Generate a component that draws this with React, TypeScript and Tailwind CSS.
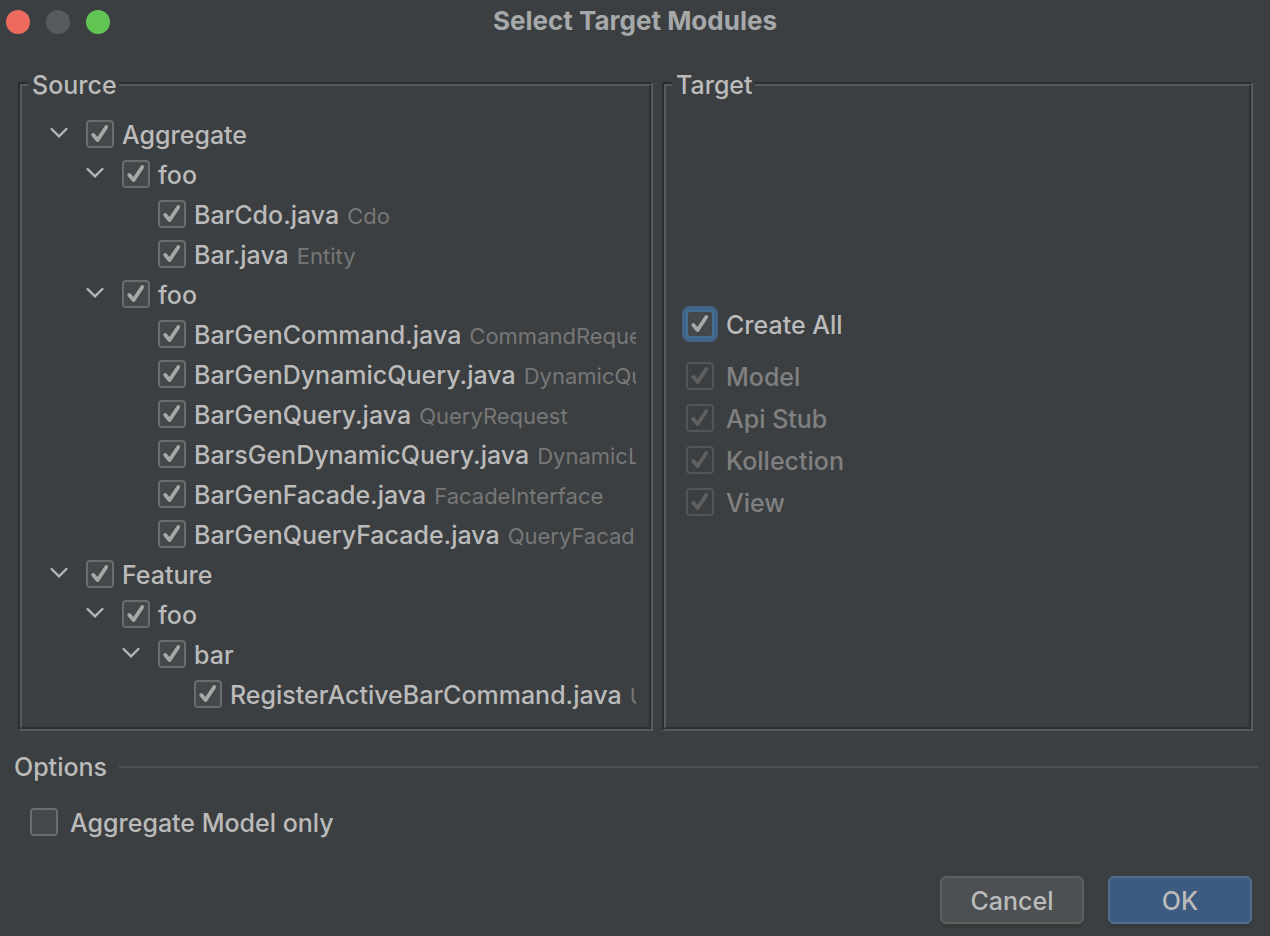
import { useState, type ReactNode } from 'react';

type Node = {
  id: string;
  name: string;
  kind?: string;
  children?: Node[];
};

const tree: Node[] = [
  {
    id: 'aggregate',
    name: 'Aggregate',
    children: [
      {
        id: 'aggregate-foo-1',
        name: 'foo',
        children: [
          { id: 'bar-cdo', name: 'BarCdo.java', kind: 'Cdo' },
          { id: 'bar', name: 'Bar.java', kind: 'Entity' },
        ],
      },
      {
        id: 'aggregate-foo-2',
        name: 'foo',
        children: [
          { id: 'gen-command', name: 'BarGenCommand.java', kind: 'CommandReque' },
          { id: 'gen-dynamic', name: 'BarGenDynamicQuery.java', kind: 'DynamicQu' },
          { id: 'gen-query', name: 'BarGenQuery.java', kind: 'QueryRequest' },
          { id: 'bars-dynamic', name: 'BarsGenDynamicQuery.java', kind: 'DynamicL' },
          { id: 'gen-facade', name: 'BarGenFacade.java', kind: 'FacadeInterface' },
          { id: 'query-facade', name: 'BarGenQueryFacade.java', kind: 'QueryFacade' },
        ],
      },
    ],
  },
  {
    id: 'feature',
    name: 'Feature',
    children: [
      {
        id: 'feature-foo',
        name: 'foo',
        children: [
          {
            id: 'feature-bar',
            name: 'bar',
            children: [
              { id: 'register', name: 'RegisterActiveBarCommand.java', kind: 'U' },
            ],
          },
        ],
      },
    ],
  },
];

const targets = ['Model', 'Api Stub', 'Kollection', 'View'];

const indents = ['pl-7', 'pl-16', 'pl-[100px]', 'pl-[136px]'];

function CheckBox({
  id,
  checked = false,
  disabled = false,
  focused = false,
}: {
  id: string;
  checked?: boolean;
  disabled?: boolean;
  focused?: boolean;
}) {
  const look = disabled
    ? 'border-[#545556] bg-transparent'
    : focused
      ? 'border-[#466d94] bg-[#43494a] ring-4 ring-[#43648a]'
      : 'border-[#6b6b6b] bg-[#43494a]';
  return (
    <span className="grid size-7 shrink-0">
      <input
        id={id}
        type="checkbox"
        defaultChecked={checked}
        disabled={disabled}
        className={`peer col-start-1 row-start-1 size-7 appearance-none rounded-[4px] border-2 outline-none ${look}`}
      />
      <svg
        viewBox="0 0 28 28"
        aria-hidden="true"
        className={`pointer-events-none col-start-1 row-start-1 size-7 opacity-0 peer-checked:opacity-100 ${
          disabled ? 'text-[#606060]' : 'text-[#a7a7a7]'
        }`}
      >
        <path
          d="M7.3 15 11.6 20 20.3 7"
          fill="none"
          stroke="currentColor"
          strokeWidth="3.8"
          strokeLinecap="round"
          strokeLinejoin="round"
        />
      </svg>
    </span>
  );
}

function TreeRow({ node, depth }: { node: Node; depth: number }) {
  const [open, setOpen] = useState(true);
  return (
    <li>
      <div className={`flex h-10 items-center ${indents[depth]}`}>
        <span className="flex w-9 shrink-0">
          {node.children && (
            <button
              type="button"
              aria-label={`Toggle ${node.name}`}
              aria-expanded={open}
              onClick={() => setOpen(!open)}
              className="pb-0.5"
            >
              <svg
                viewBox="0 0 18 12"
                className={`h-3 w-[18px] ${open ? '' : '-rotate-90'}`}
                fill="none"
                stroke="#b4b6b8"
                strokeWidth="2.4"
                strokeLinecap="round"
              >
                <path d="M1.6 2 9 9.4 16.4 2" />
              </svg>
            </button>
          )}
        </span>
        <CheckBox id={node.id} checked />
        <label htmlFor={node.id} className="flex items-baseline gap-2 pl-2 pt-0.5 whitespace-nowrap">
          {node.name}
          {node.kind && <span className="text-[22px] font-normal text-[#777777]">{node.kind}</span>}
        </label>
      </div>
      {open && node.children && (
        <ul>
          {node.children.map((child) => (
            <TreeRow key={child.id} node={child} depth={depth + 1} />
          ))}
        </ul>
      )}
    </li>
  );
}

function Group({ title, children }: { title: string; children: ReactNode }) {
  return (
    <fieldset className="flex min-w-0 flex-col">
      <legend className="relative ml-2.5 bg-[#3c3f41] pl-1 pr-0.5 leading-8">{title}</legend>
      <div className="-mt-[19px] grow border-2 border-t-[#2c2d2e] border-l-[#2c2d2e] border-r-[#58595b] border-b-[#58595b]">
        <div className="flex h-full flex-col border-2 border-t-[#58595b] border-l-[#58595b] border-r-[#2c2d2e] border-b-[#2c2d2e]">
          {children}
        </div>
      </div>
    </fieldset>
  );
}

export default function App() {
  return (
    <main className="flex min-h-screen flex-col bg-[#3c3f41] font-['Inter',sans-serif] text-[25px] leading-8 font-medium text-[#bbbbbb]">
      <header className="grid h-11 grid-cols-[1fr_auto_1fr] items-center px-1.5">
        <div className="flex gap-4">
          <button type="button" aria-label="Close" className="size-6 rounded-full bg-[#ec6a5e]" />
          <button type="button" aria-label="Minimize" disabled className="size-6 rounded-full bg-[#565a5c]" />
          <button type="button" aria-label="Zoom" className="size-6 rounded-full bg-[#61c554]" />
        </div>
        <h1 className="pb-0.5 text-[26px] font-bold text-[#a6a8a9]">Select Target Modules</h1>
      </header>

      <div className="mt-[25px] grid grid-cols-[635fr_591fr] gap-[9px] pl-[18px] pr-[17px]">
        <Group title="Source">
          <ul className="mr-[13px] overflow-hidden pt-7 pb-[13px]">
            {tree.map((node) => (
              <TreeRow key={node.id} node={node} depth={0} />
            ))}
          </ul>
        </Group>
        <Group title="Target">
          <div className="flex grow flex-col justify-center pl-5 pt-[13px]">
            <div className="mb-2.5 flex h-[42px] items-center gap-3">
              <CheckBox id="create-all" checked focused />
              <label htmlFor="create-all" className="pt-0.5">Create All</label>
            </div>
            {targets.map((target) => (
              <div key={target} className="flex h-[42px] items-center gap-3 text-[#808080]">
                <CheckBox id={target} checked disabled />
                <label htmlFor={target} className="pt-0.5">{target}</label>
              </div>
            ))}
          </div>
        </Group>
      </div>

      <section className="mt-5 pl-3.5 pr-3">
        <h2 className="flex items-center gap-3">
          Options
          <span className="h-0.5 grow bg-[#515151]" />
        </h2>
        <div className="mt-[22px] flex items-center gap-3 pl-4">
          <CheckBox id="model-only" />
          <label htmlFor="model-only" className="pt-0.5">Aggregate Model only</label>
        </div>
      </section>

      <footer className="mt-auto flex justify-end gap-6 px-[18px] pb-3">
        <button
          type="button"
          className="h-12 w-36 rounded-md border-2 border-[#5e6060] bg-[#4c5052] pt-0.5 shadow-[0_4px_0_#38393b]"
        >
          Cancel
        </button>
        <button
          type="button"
          className="h-12 w-36 rounded-md border-2 border-[#4c708c] bg-[#3d5a80] pt-0.5 shadow-[0_4px_0_#38393b]"
        >
          OK
        </button>
      </footer>
    </main>
  );
}
